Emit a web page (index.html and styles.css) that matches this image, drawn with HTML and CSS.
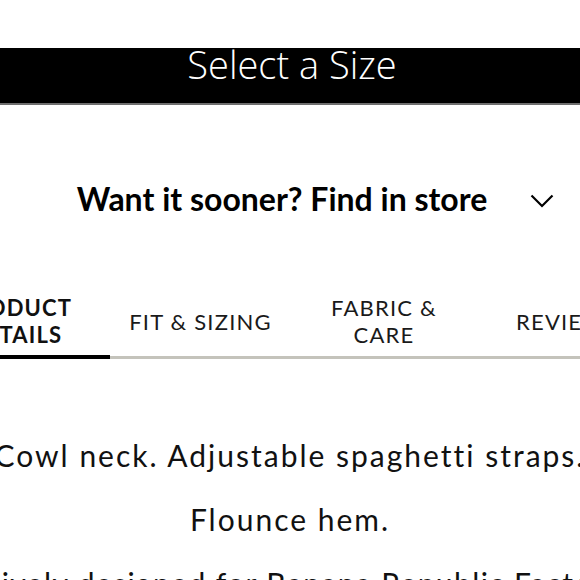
FILE: index.html
```html
<!DOCTYPE html>
<html lang="en">
<head>
<meta charset="utf-8">
<title>Product</title>
<link rel="stylesheet" href="styles.css">
</head>
<body>
<div class="page">
  <div class="size-bar"><span class="size-label">Select a Size</span></div>
  <div class="store">
    <span class="store-text">Want it sooner? Find in store</span>
    <svg class="chev" width="24" height="14" viewBox="0 0 24 14" aria-hidden="true"><path d="M1.5 1.5 L12 12 L22.5 1.5" fill="none" stroke="#000" stroke-width="2.2"/></svg>
  </div>
  <div class="tabs">
    <div class="tab tab-1 active">PRODUCT<br>DETAILS</div>
    <div class="tab tab-2">FIT &amp; SIZING</div>
    <div class="tab tab-3">FABRIC &amp;<br>CARE</div>
    <div class="tab tab-4">REVIEWS</div>
  </div>
  <div class="details">
    <p>Cowl neck. Adjustable spaghetti straps.</p>
    <p>Flounce hem.</p>
    <p class="wide">Exclusively designed for Banana Republic Factory.</p>
  </div>
</div>
</body>
</html>
```
FILE: styles.css
```css
html, body {
  margin: 0;
  padding: 0;
  background: #fff;
}
body {
  overflow: hidden;
  font-family: Lato, "Open Sans", sans-serif;
  color: #111;
}
.page {
  width: 580px;
  height: 580px;
  overflow: hidden;
  padding-top: 48px;
  box-sizing: border-box;
}
.size-bar {
  height: 55px;
  background: #000;
  border-bottom: 2px solid #6e6e6e;
  display: flex;
  justify-content: center;
  align-items: flex-start;
}
.size-label {
  font-family: "Open Sans", sans-serif;
  font-weight: 300;
  font-size: 38px;
  line-height: 38px;
  color: #fff;
  margin-left: 4px;
  margin-top: -3px;
}
.store {
  margin-top: 75px;
  display: flex;
  align-items: center;
  padding: 0 26px 0 34px;
}
.store-text {
  flex: 1;
  text-align: center;
  font-weight: 700;
  font-size: 32px;
  line-height: 38px;
  color: #000;
}
.chev {
  display: block;
  margin-top: 4px;
}
.tabs {
  margin-top: 76px;
  margin-left: -80px;
  width: 760px;
  display: flex;
  align-items: stretch;
  box-shadow: inset 0 -3px 0 #c4c3bb;
}
.tab {
  display: flex;
  align-items: center;
  justify-content: center;
  text-align: center;
  padding-bottom: 11px;
  font-size: 22px;
  line-height: 27px;
  letter-spacing: 1.2px;
  color: #1a1a1a;
  box-sizing: border-box;
  flex: none;
}
.tab-1 { width: 190px; font-weight: 700; color: #111; }
.tab-2 { width: 181px; }
.tab-3 { width: 186px; }
.tab-4 { width: 200px; justify-content: flex-start; padding-left: 39px; }
.tab.active {
  box-shadow: inset 0 -4px 0 #000;
}
.details {
  padding-top: 78px;
  margin-left: -150px;
  width: 880px;
  text-align: center;
  white-space: nowrap;
}
.details p {
  margin: 0 0 28px;
  font-size: 30px;
  line-height: 36px;
  letter-spacing: 2px;
  color: #111;
}
.details p.wide {
  letter-spacing: 1.4px;
  padding-right: 40px;
}
```
